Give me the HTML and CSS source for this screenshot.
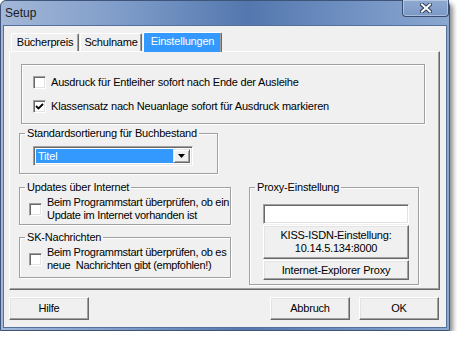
FILE: index.html
```html
<!DOCTYPE html>
<html lang="de">
<head>
  <meta charset="UTF-8" />
  <title>Setup</title>
  <link rel="stylesheet" href="styles.css">
</head>
<body>

  <div class="window">
    <div class="titlebar">
      <span class="title">Setup</span>
      <div class="close">
        <svg width="12" height="10" viewBox="0 0 12 10">
          <path d="M2 1.5 L10 8.5 M10 1.5 L2 8.5" stroke="#2b3a55" stroke-width="4" stroke-linecap="square" fill="none"/>
          <path d="M2 1.5 L10 8.5 M10 1.5 L2 8.5" stroke="#fff" stroke-width="2" stroke-linecap="square" fill="none"/>
        </svg>
      </div>
    </div>

    <div class="client">
      <div class="tabs">
        <div class="tab first">Bücherpreis</div>
        <div class="tab second">Schulname</div>
        <div class="tab active">Einstellungen</div>
      </div>

      <div class="panel">
        <div class="group options">
          <label class="check">
            <span class="box"></span>
            <span>Ausdruck für Entleiher sofort nach Ende der Ausleihe</span>
          </label>
          <label class="check">
            <span class="box">
              <svg width="11" height="11" viewBox="0 0 11 11">
                <polyline points="2,5 4.5,7.5 9,3" stroke="#000" stroke-width="1.8" fill="none"/>
              </svg>
            </span>
            <span>Klassensatz nach Neuanlage sofort für Ausdruck markieren</span>
          </label>
        </div>

        <fieldset class="group sort">
          <legend>Standardsortierung für Buchbestand</legend>
          <div class="combo">
            <span class="combo-value">Titel</span>
            <span class="combo-btn">
              <svg width="7" height="4" viewBox="0 0 7 4"><polygon points="0,0 7,0 3.5,4" fill="#000"/></svg>
            </span>
          </div>
        </fieldset>

        <div class="lower">
          <div class="left-col">
            <fieldset class="group">
              <legend>Updates über Internet</legend>
              <label class="check multi">
                <span class="box"></span>
                <span>Beim Programmstart überprüfen, ob ein<br>Update im Internet vorhanden ist</span>
              </label>
            </fieldset>
            <fieldset class="group news">
              <legend>SK-Nachrichten</legend>
              <label class="check multi">
                <span class="box"></span>
                <span>Beim Programmstart überprüfen, ob es<br>neue&nbsp; Nachrichten gibt (empfohlen!)</span>
              </label>
            </fieldset>
          </div>

          <fieldset class="group proxy">
            <legend>Proxy-Einstellung</legend>
            <div class="textbox"></div>
            <div class="btn kiss">KISS-ISDN-Einstellung:<br>10.14.5.134:8000</div>
            <div class="btn ie">Internet-Explorer Proxy</div>
          </fieldset>
        </div>
      </div>

      <div class="footer">
        <div class="btn wide">Hilfe</div>
        <div class="buttons">
          <div class="btn wide">Abbruch</div>
          <div class="btn wide">OK</div>
        </div>
      </div>
    </div>
  </div>

</body>
</html>
```

FILE: styles.css
```css
* {
  box-sizing: border-box;
}

body {
  margin: 0;
  background: #fff;
  font-family: "Liberation Sans", Arial, sans-serif;
  font-size: 11px;
  letter-spacing: -0.2px;
  line-height: 13px;
  color: #000;
}

/* window frame */

.window {
  width: 450px;
  height: 331px;
  border: 1px solid #3f5479;
  border-radius: 6px 6px 0 0;
  background: linear-gradient(90deg, #a3b7d8 0%, #7d9bc8 28%, #5377ae 55%, #7393c4 80%, #8aa7cf 100%);
  box-shadow: 3px 3px 5px rgba(0,0,0,0.45);
  display: flex;
  flex-direction: column;
}

.titlebar {
  height: 24px;
  display: flex;
  justify-content: space-between;
  align-items: flex-start;
}

.title {
  font-size: 12px;
  letter-spacing: 0;
  color: #1c1c1c;
  padding: 6px 0 0 4px;
}

.close {
  width: 47px;
  height: 17px;
  margin-top: -1px;
  border: 1px solid #3a4d70;
  border-top: none;
  border-radius: 0 0 4px 4px;
  background: linear-gradient(#8fa9d0, #7b98c6);
  box-shadow: inset 0 0 0 1px rgba(255,255,255,0.35);
  display: flex;
  align-items: center;
  justify-content: center;
}

.client {
  flex: 1;
  margin: 0 2px 2px;
  background: #f0f0f0;
  border: 1px solid #55709a;
  padding: 6px 6px 0 5px;
}

/* tabs */

.tabs {
  height: 19px;
  display: flex;
  align-items: flex-end;
  padding-left: 2px;
}

.tab {
  height: 18px;
  border: 1px solid #fff;
  border-right-color: #696969;
  border-bottom: none;
  border-radius: 2px 2px 0 0;
  box-shadow: inset -1px 0 #a0a0a0;
  display: flex;
  align-items: center;
  justify-content: center;
  padding-bottom: 1px;
}

.tab.first {
  width: 68px;
}

.tab.second {
  width: 62px;
  margin-left: 1px;
}

.tab.active {
  width: 79px;
  height: 20px;
  margin-left: 1px;
  margin-bottom: -1px;
  background: #3399ff;
  color: #fff;
  position: relative;
  padding-bottom: 2px;
}

.panel {
  height: 239px;
  border: 1px solid #fff;
  border-right-color: #696969;
  border-bottom-color: #696969;
  box-shadow: inset -1px -1px #a0a0a0;
  padding: 12px 0 0 9px;
}

/* groups */

.group {
  margin: 0;
  border: 1px solid #a0a0a0;
  box-shadow: 1px 1px 0 #fff, inset 1px 1px 0 #fff;
}

fieldset.group {
  padding: 6px 0 7px 5px;
}

legend {
  padding: 0 2px;
  line-height: 13px;
}

.options {
  margin-left: 2px;
  width: 404px;
  height: 60px;
  padding: 11px 0 0 11px;
  display: flex;
  flex-direction: column;
  gap: 11px;
}

.check {
  display: flex;
  align-items: center;
  gap: 5px;
  height: 13px;
  white-space: nowrap;
}

.check.multi {
  height: 26px;
  margin-left: 4px;
  letter-spacing: -0.3px;
}

.box {
  width: 13px;
  height: 13px;
  flex: none;
  background: #fff;
  border: 1px solid;
  border-color: #a0a0a0 #fff #fff #a0a0a0;
  box-shadow: inset 1px 1px #696969, inset -1px -1px #e3e3e3;
  display: flex;
  align-items: center;
  justify-content: center;
}

.sort {
  width: 199px;
  margin-top: 3px;
}

.combo {
  width: 160px;
  height: 20px;
  margin-left: 8px;
  background: #fff;
  border: 1px solid;
  border-color: #a0a0a0 #fff #fff #a0a0a0;
  box-shadow: inset 1px 1px #696969, inset -1px -1px #e3e3e3;
  padding: 2px;
  display: flex;
}

.combo-value {
  flex: 1;
  background: #3399ff;
  color: #fff;
  padding-left: 2px;
  line-height: 14px;
}

.combo-btn {
  width: 17px;
  background: #f0f0f0;
  border: 1px solid;
  border-color: #e3e3e3 #696969 #696969 #e3e3e3;
  box-shadow: inset 1px 1px #fff, inset -1px -1px #a0a0a0;
  display: flex;
  align-items: center;
  justify-content: center;
}

.lower {
  display: flex;
  gap: 18px;
  margin-top: 7px;
}

.left-col {
  width: 212px;
  display: flex;
  flex-direction: column;
  gap: 6px;
}

.left-col .group {
  padding: 2px 0 2px 5px;
}

.left-col .news {
  padding-bottom: 5px;
}

.proxy {
  width: 170px;
}

fieldset.proxy {
  padding: 10px 0 4px 5px;
}

.textbox {
  width: 146px;
  height: 20px;
  margin-left: 8px;
  background: #fff;
  border: 1px solid;
  border-color: #a0a0a0 #fff #fff #a0a0a0;
  box-shadow: inset 1px 1px #696969, inset -1px -1px #e3e3e3;
}

/* buttons */

.btn {
  background: #f0f0f0;
  border: 1px solid;
  border-color: #fff #696969 #696969 #fff;
  box-shadow: inset -1px -1px #a0a0a0, inset 1px 1px #e3e3e3;
  display: flex;
  align-items: center;
  justify-content: center;
  text-align: center;
}

.kiss,
.ie {
  width: 146px;
  margin-left: 8px;
  margin-top: 1px;
}

.kiss {
  height: 34px;
}

.ie {
  height: 20px;
}

.footer {
  display: flex;
  justify-content: space-between;
  margin-top: 7px;
  margin-right: 1px;
}

.buttons {
  display: flex;
  gap: 9px;
}

.btn.wide {
  width: 80px;
  height: 23px;
}
```
